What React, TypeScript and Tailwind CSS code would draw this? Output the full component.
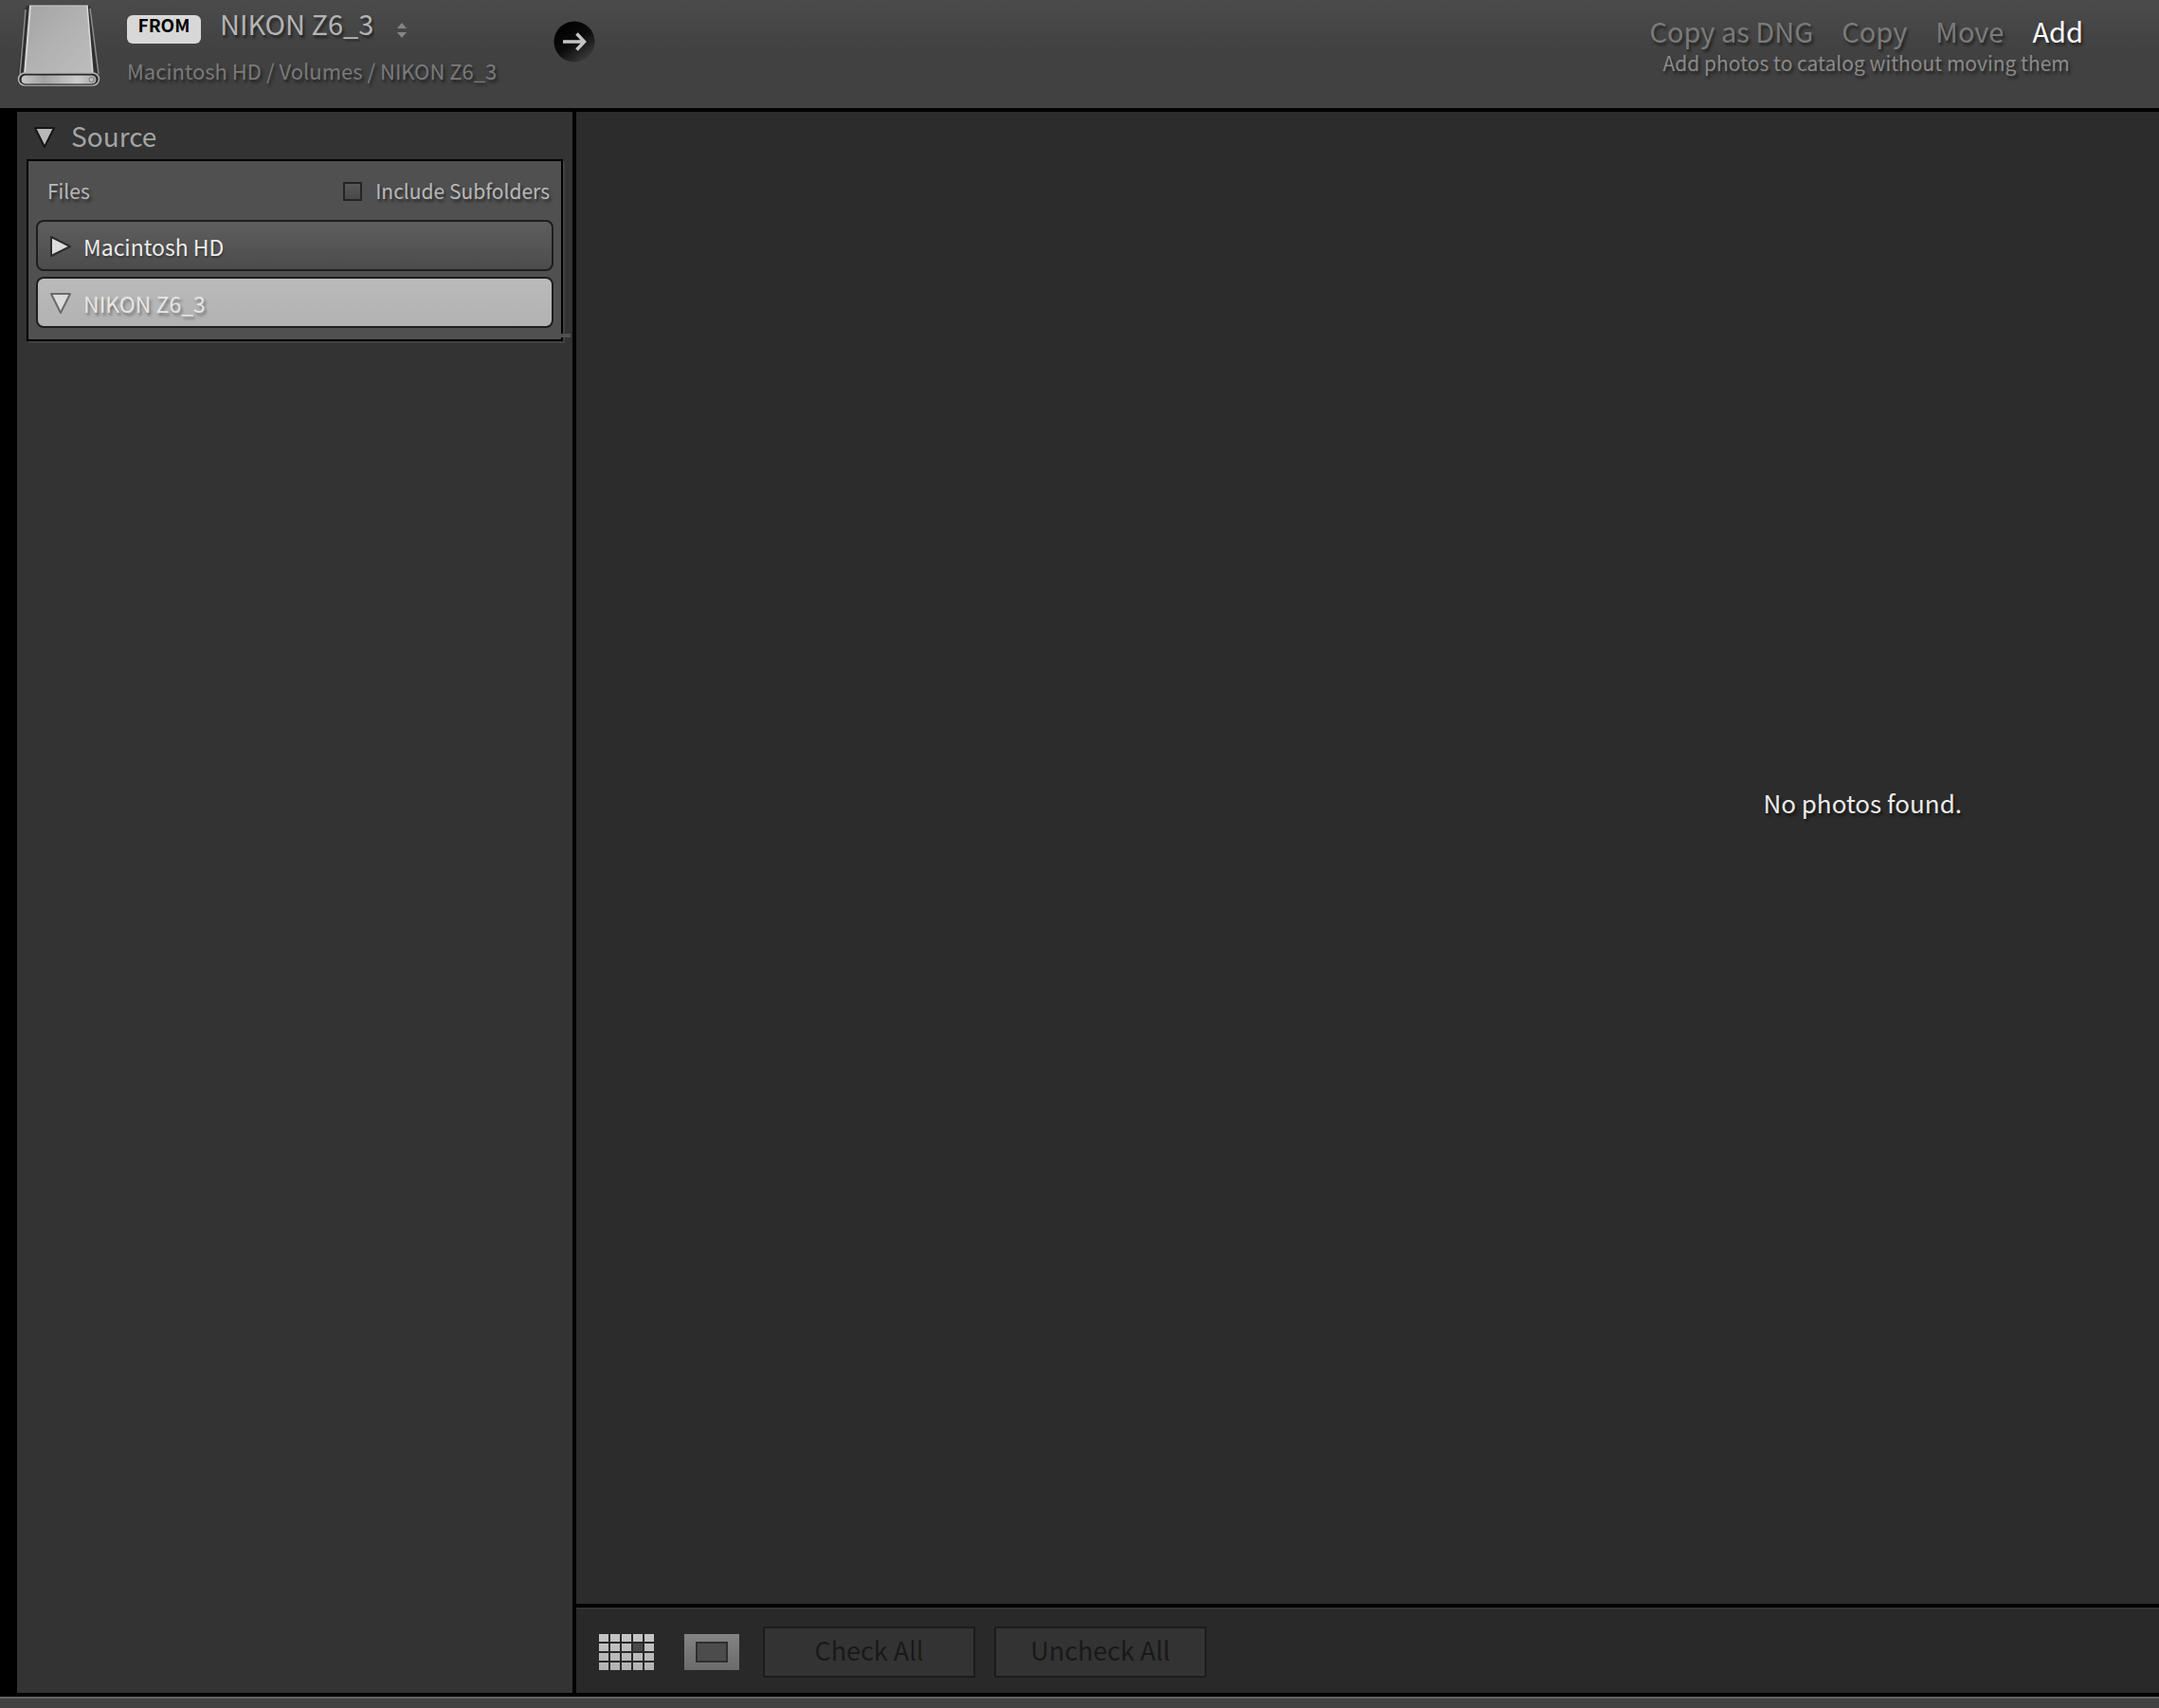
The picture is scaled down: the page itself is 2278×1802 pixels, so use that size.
import { useState } from "react";

const shadow = "[text-shadow:2px_3px_3px_rgba(0,0,0,0.5)]";

const DriveIcon = () => (
  <svg width="88" height="88" viewBox="0 0 88 88" aria-hidden="true">
    <defs>
      <linearGradient id="driveTop" x1="0" y1="0" x2="1" y2="1">
        <stop offset="0" stopColor="#a4a4a4" />
        <stop offset="0.5" stopColor="#b2b2b2" />
        <stop offset="1" stopColor="#bdbdbd" />
      </linearGradient>
      <linearGradient id="driveFront" x1="0" y1="0" x2="1" y2="0">
        <stop offset="0" stopColor="#c8c8c8" />
        <stop offset="0.3" stopColor="#a2a2a2" />
        <stop offset="0.75" stopColor="#cdcdcd" />
        <stop offset="1" stopColor="#a8a8a8" />
      </linearGradient>
    </defs>
    <path d="M12 2H75Q77 2 77 5L87 74H1L8 8Q8 2 12 2Z" fill="#303030" />
    <path d="M9 6L3 74" stroke="#8e8e8e" strokeWidth="1.5" />
    <path d="M77 5L86 74" stroke="#8e8e8e" strokeWidth="1.5" />
    <path d="M14 2H74L80 74H8Z" fill="url(#driveTop)" />
    <path d="M14 2L8 74" stroke="#d6d6d6" strokeWidth="2" />
    <path d="M74 2L80 74" stroke="#dadada" strokeWidth="1.5" />
    <path d="M13 2H75" stroke="#d0d0d0" strokeWidth="1" />
    <rect x="1.500" y="73" width="85" height="13" rx="6.500" fill="#303030" stroke="#b5b5b5" strokeWidth="1.5" />
    <rect x="4" y="75" width="80" height="10" rx="5" fill="url(#driveFront)" stroke="#202020" strokeWidth="1" />
    <circle cx="78.500" cy="80" r="2.500" fill="#c2c2c2" stroke="#747474" />
  </svg>
);

const Triangle = ({ open, color, outline }: { open: boolean; color: string; outline: string }) => (
  <svg width="24" height="24" viewBox="0 0 24 24" aria-hidden="true">
    <path
      d={open ? "M2 2H22L12 22Z" : "M2 2L22 12L2 22Z"}
      fill={color}
      stroke={outline}
      strokeWidth="2"
      strokeLinejoin="round"
    />
  </svg>
);

const UpDownIcon = () => (
  <svg width="10" height="16" viewBox="0 0 10 16" fill="#858585" aria-hidden="true">
    <path d="M5 0L10 6H0Z" />
    <path d="M0 10H10L5 16Z" />
  </svg>
);

const ArrowBadge = () => (
  <svg width="44" height="44" viewBox="0 0 44 44" aria-hidden="true">
    <defs>
      <linearGradient id="arrowBg" x1="0.2" y1="0.1" x2="0.8" y2="0.95">
        <stop offset="0" stopColor="#000" />
        <stop offset="0.5" stopColor="#0c0c0c" />
        <stop offset="1" stopColor="#3c3c3c" />
      </linearGradient>
    </defs>
    <circle cx="22" cy="22" r="21.500" fill="url(#arrowBg)" />
    <path d="M10 22H32M24.500 13.500L32.500 22L24.500 30.500" fill="none" stroke="#c4c4c4" strokeWidth="3.500" />
  </svg>
);

const GridIcon = () => (
  <svg width="58" height="38" viewBox="0 0 58 38" aria-hidden="true">
    <defs>
      <linearGradient id="gridFill" gradientUnits="userSpaceOnUse" x1="0" y1="0" x2="0" y2="38">
        <stop offset="0" stopColor="#c6c6c6" />
        <stop offset="1" stopColor="#b2b2b2" />
      </linearGradient>
    </defs>
    {[0, 1, 2, 3].map((row) =>
      [0, 1, 2, 3, 4].map((col) => (
        <rect
          key={`${row}-${col}`}
          x={col * 12}
          y={row * 10}
          width="10"
          height="8"
          fill={row === 1 && col === 3 ? "#4a4a4a" : "url(#gridFill)"}
        />
      ))
    )}
  </svg>
);

const LoupeIcon = () => (
  <svg width="58" height="38" viewBox="0 0 58 38" aria-hidden="true">
    <defs>
      <linearGradient id="loupeFill" x1="0" y1="0" x2="0" y2="1">
        <stop offset="0" stopColor="#848484" />
        <stop offset="1" stopColor="#6b6b6b" />
      </linearGradient>
    </defs>
    <rect width="58" height="38" fill="url(#loupeFill)" />
    <rect x="13" y="9" width="32" height="20" fill="#4c4c4c" stroke="#2e2e2e" strokeWidth="2" />
  </svg>
);

const Header = () => {
  const [mode, setMode] = useState("Add");

  return (
    <header className="flex items-start justify-between border-b-4 border-black bg-linear-to-b from-[#4b4b4b] to-[#414141] to-50% pr-20 pb-[22px] pl-[18px]">
      <div className="flex items-start">
        <div className="mt-1">
          <DriveIcon />
        </div>
        <div className="ml-7 pt-1">
          <div className="flex items-start">
            <span className="mt-3 h-[30px] w-[78px] rounded-md bg-[#d8d8d8] text-center text-[19px] leading-5 font-bold text-black">
              FROM
            </span>
            <select
              aria-label="Import source"
              className={`ml-5 h-10 appearance-none bg-transparent text-[29px] leading-10 text-[#b4b4b4] ${shadow}`}
            >
              <option>NIKON Z6_3</option>
            </select>
            <span className="mt-5 ml-6">
              <UpDownIcon />
            </span>
          </div>
          <p className={`mt-3 text-[22px] leading-8 text-[#7a7a7a] ${shadow}`}>
            Macintosh HD / Volumes / NIKON Z6_3
          </p>
        </div>
        <div className="mt-[22px] ml-15">
          <ArrowBadge />
        </div>
      </div>

      <div className="flex flex-col items-center pt-3">
        <div className="flex gap-[30px]">
          {["Copy as DNG", "Copy", "Move", "Add"].map((name) => (
            <button
              key={name}
              type="button"
              aria-pressed={mode === name}
              onClick={() => setMode(name)}
              className={`text-[29px] leading-10 ${shadow} ${mode === name ? "text-white" : "text-[#7a7a7a]"}`}
            >
              {name}
            </button>
          ))}
        </div>
        <p className={`text-[21px] leading-7 text-[#8a8a8a] ${shadow}`}>
          Add photos to catalog without moving them
        </p>
      </div>
    </header>
  );
};

const Sidebar = () => {
  const [selected, setSelected] = useState("NIKON Z6_3");

  return (
    <aside className="w-[608px] shrink-0 border-r-4 border-l-[18px] border-black bg-[#333333] pr-2 pl-[10px]">
      <h2>
        <button type="button" aria-expanded="true" className="flex h-[50px] items-center pl-[7px]">
          <span className="pt-1">
            <Triangle open color="#b8b8b8" outline="#161616" />
          </span>
          <span className="ml-4 text-[28px] leading-10 text-[#a4a4a4]">Source</span>
        </button>
      </h2>

      <section className="relative mr-0.5 border-2 border-black bg-[#505050] px-2 pb-3 shadow-[2px_2px_0_#424242]">
        <div className="flex h-[62px] items-center justify-between pr-1 pl-3">
          <h3 className={`text-[21px] leading-8 text-[#b8b8b8] ${shadow}`}>Files</h3>
          <label className={`flex items-center text-[21px] leading-8 text-[#b8b8b8] ${shadow}`}>
            <input
              type="checkbox"
              className="mt-0.5 mr-3.5 size-5 appearance-none border-2 border-[#242424] bg-linear-to-b from-[#585858] to-[#484848]"
            />
            Include Subfolders
          </label>
        </div>
        <ul className="flex flex-col gap-1.5">
          {["Macintosh HD", "NIKON Z6_3"].map((name) => {
            const active = selected === name;
            return (
              <li key={name}>
                <button
                  type="button"
                  aria-expanded={active}
                  onClick={() => setSelected(name)}
                  className={`flex h-[54px] w-full items-center rounded-lg border-2 border-[#1e1e1e] pt-0.5 pl-3 text-[23px] leading-8 ${
                    active
                      ? "bg-linear-to-b from-[#bababa] to-[#b2b2b2] text-[#e6e6e6] [text-shadow:2px_3px_3px_rgba(0,0,0,0.35)]"
                      : "bg-linear-to-b from-[#5e5e5e] to-[#4c4c4c] text-[#ececec] [text-shadow:1px_2px_2px_rgba(0,0,0,0.35)]"
                  }`}
                >
                  <Triangle open={active} color="#dcdcdc" outline={active ? "#6a6a6a" : "#2c2c2c"} />
                  <span className="ml-3">{name}</span>
                </button>
              </li>
            );
          })}
        </ul>
        <span className="absolute -right-2.5 bottom-0.5 h-1 w-2.5 bg-[#505050]" />
      </section>
    </aside>
  );
};

const Toolbar = () => (
  <div className="border-t-4 border-black bg-[#292929]">
    <div className="flex items-center border-t-2 border-[#333333] pt-[18px] pb-4 pl-6">
      <button type="button" aria-label="Grid view">
        <GridIcon />
      </button>
      <button type="button" aria-label="Loupe view" className="ml-8">
        <LoupeIcon />
      </button>
      <div className="ml-[25px] flex gap-5">
        {["Check All", "Uncheck All"].map((name) => (
          <button
            key={name}
            type="button"
            disabled
            className="h-[54px] w-[224px] border-2 border-[#1c1c1c] bg-[#333333] pb-1 text-[27px] leading-10 text-[#191919]"
          >
            {name}
          </button>
        ))}
      </div>
    </div>
  </div>
);

export default function App() {
  return (
    <div className="flex min-h-screen flex-col bg-black font-['Noto_Sans_CJK_SC','Noto_Sans',sans-serif]">
      <Header />
      <div className="flex flex-1">
        <Sidebar />
        <main className="flex flex-1 flex-col">
          <div className="flex flex-1 items-center justify-end bg-[#2c2c2c] pr-52 pb-[116px]">
            <p className={`text-[26px] leading-10 text-[#ebebeb] ${shadow}`}>No photos found.</p>
          </div>
          <Toolbar />
        </main>
      </div>
      <footer className="h-4 border-t-4 border-black bg-[#424242] shadow-[inset_0_2px_0_#646464]" />
    </div>
  );
}
